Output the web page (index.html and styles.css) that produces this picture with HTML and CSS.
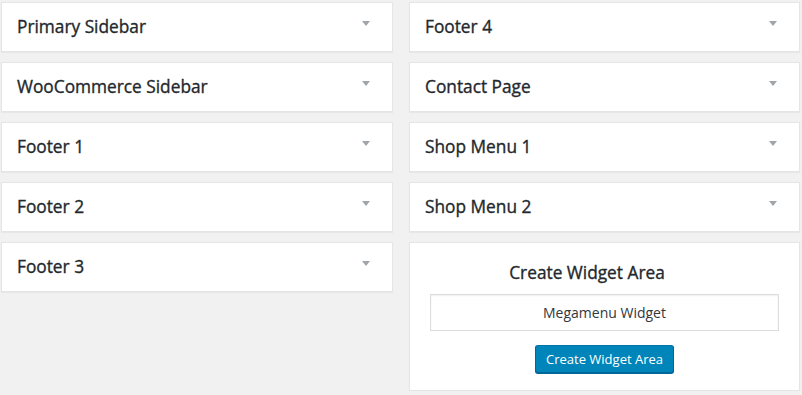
FILE: index.html
```html
<!DOCTYPE html>
<html lang="en">
<head>
    <meta charset="UTF-8">
    <meta name="viewport" content="width=device-width, initial-scale=1.0">
    <title>Widget Areas</title>
    <link rel="stylesheet" href="styles.css">
</head>
<body>
    <div class="sidebars">
        <div class="column">
            <div class="sidebar-name"><h3>Primary Sidebar</h3><span class="arrow"></span></div>
            <div class="sidebar-name"><h3>WooCommerce Sidebar</h3><span class="arrow"></span></div>
            <div class="sidebar-name"><h3>Footer 1</h3><span class="arrow"></span></div>
            <div class="sidebar-name"><h3>Footer 2</h3><span class="arrow"></span></div>
            <div class="sidebar-name"><h3>Footer 3</h3><span class="arrow"></span></div>
        </div>
        <div class="column">
            <div class="sidebar-name"><h3>Footer 4</h3><span class="arrow"></span></div>
            <div class="sidebar-name"><h3>Contact Page</h3><span class="arrow"></span></div>
            <div class="sidebar-name"><h3>Shop Menu 1</h3><span class="arrow"></span></div>
            <div class="sidebar-name"><h3>Shop Menu 2</h3><span class="arrow"></span></div>
            <form class="create-area">
                <h3>Create Widget Area</h3>
                <input type="text" class="area-name" value="Megamenu Widget">
                <button type="submit" class="button-primary">Create Widget Area</button>
            </form>
        </div>
    </div>
</body>
</html>
```
FILE: styles.css
```css
body {
    font-family: "Open Sans", sans-serif;
    margin: 0;
    padding: 0;
    background-color: #f1f1f1;
    color: #23282d;
}
.sidebars {
    display: flex;
    gap: 16px;
    padding: 2px 0 0 1px;
}
.column {
    display: flex;
    flex-direction: column;
    gap: 10px;
}
.column:first-child {
    width: 392px;
}
.column:last-child {
    width: 391px;
}
.sidebar-name {
    box-sizing: border-box;
    height: 50px;
    display: flex;
    justify-content: space-between;
    align-items: center;
    padding: 0 22px 0 15px;
    background: #fff;
    border: 1px solid #e5e5e5;
    box-shadow: 0 1px 1px rgba(0, 0, 0, 0.04);
}
.sidebar-name h3,
.create-area h3 {
    margin: 0;
    font-size: 17.3px;
    font-weight: 400;
    line-height: 24px;
    -webkit-text-stroke: 0.35px #23282d;
}
.arrow {
    align-self: flex-start;
    margin-top: 18px;
    width: 0;
    height: 0;
    border-left: 4px solid transparent;
    border-right: 4px solid transparent;
    border-top: 5px solid #a0a5aa;
}
.create-area {
    box-sizing: border-box;
    height: 149px;
    display: flex;
    flex-direction: column;
    align-items: center;
    padding: 18px 20px 0;
    background: #fff;
    border: 1px solid #e5e5e5;
    box-shadow: 0 1px 1px rgba(0, 0, 0, 0.04);
}
.create-area h3 {
    margin-bottom: 9px;
    padding-right: 35px;
}
.area-name {
    box-sizing: border-box;
    width: 100%;
    height: 37px;
    margin: 0;
    border: 1px solid #ddd;
    box-shadow: inset 0 1px 2px rgba(0, 0, 0, 0.07);
    font-family: "Open Sans", sans-serif;
    font-size: 14px;
    color: #32373c;
    text-align: center;
}
.button-primary {
    margin-top: 14px;
    height: 28px;
    padding: 0 10px;
    background: #0085ba;
    border: 1px solid #0073aa;
    border-color: #0073aa #006799 #006799;
    border-radius: 3px;
    box-shadow: 0 1px 0 #006799;
    color: #fff;
    font-family: "Open Sans", sans-serif;
    font-size: 13px;
    line-height: 26px;
    cursor: pointer;
}
```
